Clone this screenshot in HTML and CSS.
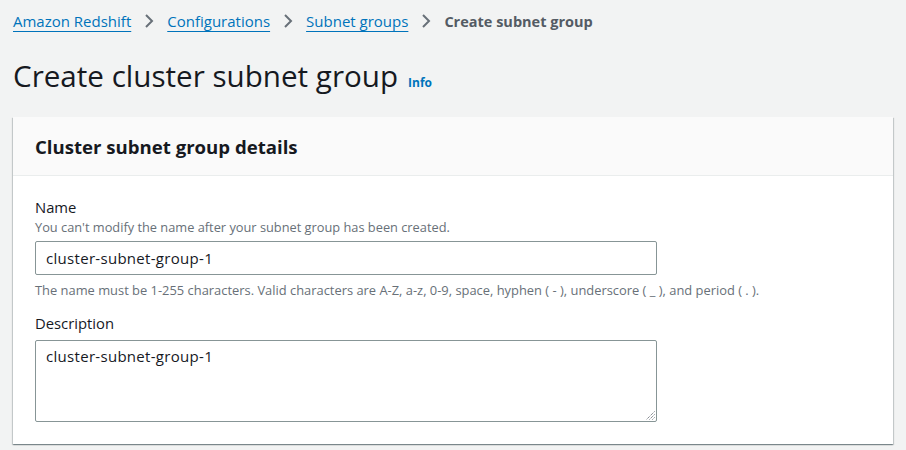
FILE: index.html
```html
<!DOCTYPE html>
<html>
<head>
<meta charset="utf-8">
<link rel="stylesheet" href="styles.css">
</head>
<body>
<div class="page">
  <nav class="crumbs">
    <a class="crumb-link" href="#">Amazon Redshift</a>
    <svg class="chev" viewBox="0 0 16 16"><path d="M5 2l6 6-6 6" fill="none" stroke="#687078" stroke-width="2"/></svg>
    <a class="crumb-link" href="#">Configurations</a>
    <svg class="chev" viewBox="0 0 16 16"><path d="M5 2l6 6-6 6" fill="none" stroke="#687078" stroke-width="2"/></svg>
    <a class="crumb-link" href="#">Subnet groups</a>
    <svg class="chev" viewBox="0 0 16 16"><path d="M5 2l6 6-6 6" fill="none" stroke="#687078" stroke-width="2"/></svg>
    <span class="crumb-current">Create subnet group</span>
  </nav>
  <div class="title-row">
    <h1 class="title">Create cluster subnet group</h1>
    <a class="info" href="#">Info</a>
  </div>
  <section class="panel">
    <header class="panel-head">
      <h2 class="panel-title">Cluster subnet group details</h2>
    </header>
    <div class="panel-body">
      <div class="field">
        <label class="label">Name</label>
        <div class="desc">You can't modify the name after your subnet group has been created.</div>
        <div class="input">cluster-subnet-group-1</div>
        <div class="hint">The name must be 1-255 characters. Valid characters are A-Z, a-z, 0-9, space, hyphen ( - ), underscore ( _ ), and period ( . ).</div>
      </div>
      <div class="field">
        <label class="label">Description</label>
        <div class="textarea">cluster-subnet-group-1
          <svg class="grip" viewBox="0 0 10 10"><path d="M9.5 1.5L1.5 9.5M9.5 4.5L4.5 9.5M9.5 7.5L7.5 9.5" stroke="#545b64" stroke-width="1" stroke-dasharray="1 1" fill="none"/></svg>
        </div>
      </div>
    </div>
  </section>
</div>
</body>
</html>
```
FILE: styles.css
```css
* { box-sizing: border-box; }
html, body { margin: 0; padding: 0; }
body {
  background: #f2f3f3;
  font-family: "Open Sans", "Noto Sans", sans-serif;
  color: #16191f;
  width: 906px;
  height: 450px;
  overflow: hidden;
}
.page { padding: 10px 13px 0 13px; }
.crumbs {
  display: flex;
  align-items: center;
  height: 22px;
  font-size: 15px;
}
.crumb-link {
  color: #0073bb;
  text-decoration: underline;
  text-underline-offset: 4px;
}
.chev { width: 16px; height: 16px; margin: 0 10px; }
.crumb-current { color: #545b64; font-weight: 700; font-size: 14.5px; }
.title-row {
  display: flex;
  align-items: baseline;
  margin-top: 26px;
  height: 50px;
}
.title {
  margin: 0;
  font-size: 29.6px;
  font-weight: 400;
  line-height: 36px;
  color: #16191f;
}
.info {
  margin-left: 10px;
  font-size: 12px;
  font-weight: 700;
  color: #0073bb;
  text-decoration: none;
}
.panel {
  margin-top: 9px;
  background: #fff;
  box-shadow: 0 1px 1px 0 rgba(0,28,36,.3), 1px 1px 1px 0 rgba(0,28,36,.15), -1px 1px 1px 0 rgba(0,28,36,.15);
}
.panel-head {
  background: #fafafa;
  border-bottom: 1px solid #eaeded;
  height: 59px;
  display: flex;
  align-items: center;
  padding: 0 22px;
}
.panel-title { margin: 0; font-size: 18.6px; font-weight: 700; }
.panel-body { padding: 20px 22px 22px 22px; }
.field + .field { margin-top: 12px; }
.label { display: block; font-size: 14.8px; line-height: 22px; color: #16191f; }
.desc { font-size: 12.8px; line-height: 18px; color: #687078; }
.input {
  margin-top: 5px;
  width: 622px;
  height: 34px;
  border: 1px solid #879596;
  border-radius: 2px;
  padding: 0 10px;
  font-size: 15px;
  letter-spacing: 0.3px;
  line-height: 32px;
}
.hint { margin-top: 5px; font-size: 12.9px; line-height: 20px; color: #687078; }
.textarea {
  position: relative;
  margin-top: 6px;
  width: 622px;
  height: 82px;
  border: 1px solid #879596;
  border-radius: 2px;
  padding: 4px 10px;
  font-size: 15px;
  letter-spacing: 0.3px;
  line-height: 22px;
}
.grip { position: absolute; right: 1px; bottom: 1px; width: 10px; height: 10px; }
```
